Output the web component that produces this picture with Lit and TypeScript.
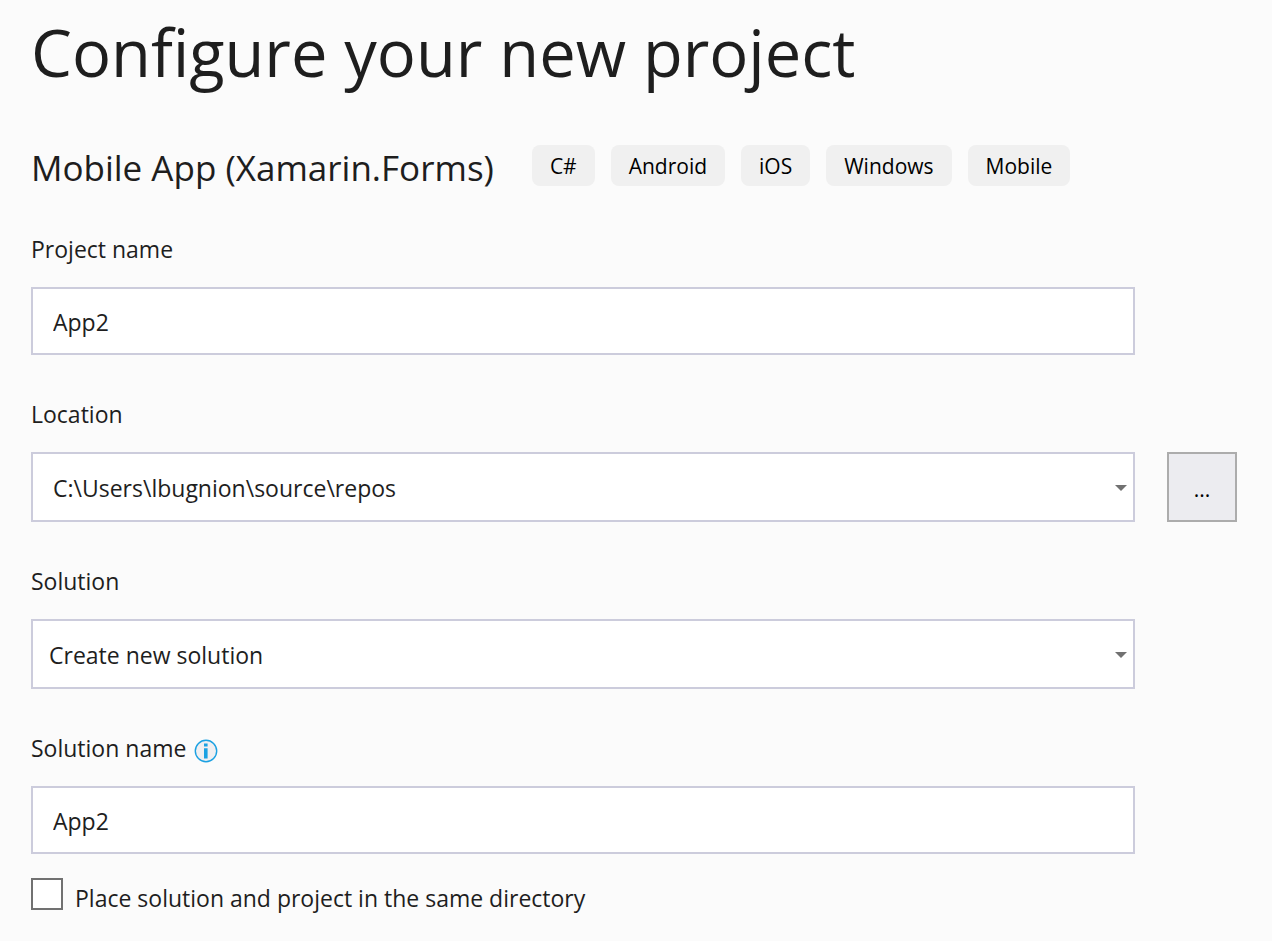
import { LitElement, html, css, svg } from "lit";
import { customElement, property } from "lit/decorators.js";

const chevron = svg`<path d="M0 0H12L6 6Z" fill="#717171" />`;

@customElement("tag-list")
class TagList extends LitElement {
  @property({ attribute: false }) tags: string[] = [];

  static styles = css`
    .tags {
      display: flex;
      flex-wrap: wrap;
      gap: 16px;
      margin: 0;
      padding: 0;
      list-style: none;
    }
    .tag {
      padding: 2px 18px 0;
      border-radius: 8px;
      background: #f0f0f0;
      color: #000;
      font-size: 21px;
      line-height: 39px;
    }
  `;

  render() {
    return html`<ul class="tags">
      ${this.tags.map((t) => html`<li class="tag">${t}</li>`)}
    </ul>`;
  }
}

@customElement("app-root")
class AppRoot extends LitElement {
  static styles = css`
    :host {
      display: block;
      min-height: 100vh;
      box-sizing: border-box;
      background: #fbfbfb;
      color: #1e1e1e;
      font-family: "Segoe UI", "Open Sans", "Noto Sans", sans-serif;
      font-size: 23px;
      line-height: 32px;
    }
    * {
      box-sizing: border-box;
    }
    .page {
      padding: 8px 35px 24px 31px;
    }
    .title {
      margin: 0;
      font-size: 65px;
      line-height: 88px;
      font-weight: 400;
    }
    .template {
      display: flex;
      align-items: center;
      gap: 38px;
      margin-top: 46px;
    }
    .subtitle {
      margin: 0;
      padding-top: 2px;
      font-size: 35px;
      line-height: 48px;
      font-weight: 400;
    }
    .tags {
      margin-bottom: 4px;
    }
    .form {
      display: flex;
      flex-direction: column;
      gap: 43px;
      margin-top: 41px;
    }
    .field {
      display: grid;
      grid-template-columns: 1fr 70px;
      column-gap: 32px;
      row-gap: 22px;
    }
    .caption {
      grid-column: 1 / -1;
      display: flex;
      align-items: center;
      gap: 8px;
    }
    .info {
      display: block;
      margin-top: 6px;
    }
    .box {
      width: 100%;
      height: 68px;
      margin: 0;
      padding: 2px 20px 0;
      border: 2px solid #ccccdc;
      border-radius: 0;
      background: #fff;
      color: inherit;
      font: inherit;
      appearance: none;
    }
    .combo {
      display: grid;
      align-items: center;
    }
    .combo > * {
      grid-area: 1 / 1;
    }
    .combo .box {
      height: 70px;
    }
    .combo .list {
      padding-left: 16px;
    }
    .arrow {
      justify-self: end;
      margin-top: 2px;
      margin-right: 8px;
      pointer-events: none;
    }
    .browse {
      height: 70px;
      padding: 4px 0 0;
      border: 2px solid #acacac;
      background: #ececf0;
      color: #000;
      font: inherit;
      font-size: 21px;
    }
    .check {
      display: flex;
      align-items: center;
      gap: 12px;
      margin-top: 20px;
    }
    .tick {
      appearance: none;
      flex: none;
      width: 32px;
      height: 32px;
      margin: 0;
      border: 2px solid #717171;
      background: #fff;
    }
    .tick:checked {
      background: #717171;
      box-shadow: inset 0 0 0 5px #fff;
    }
    .check-text {
      padding-top: 8px;
    }
  `;

  private arrow() {
    return html`<svg class="arrow" width="12" height="6" viewBox="0 0 12 6" aria-hidden="true">${chevron}</svg>`;
  }

  render() {
    return html`
      <main class="page">
        <h1 class="title">Configure your new project</h1>
        <div class="template">
          <h2 class="subtitle">Mobile App (Xamarin.Forms)</h2>
          <tag-list class="tags" .tags=${["C#", "Android", "iOS", "Windows", "Mobile"]}></tag-list>
        </div>
        <form class="form" @submit=${(e: Event) => e.preventDefault()}>
          <div class="field">
            <label class="caption" for="project">Project name</label>
            <input class="box" id="project" type="text" value="App2" />
          </div>
          <div class="field">
            <label class="caption" for="location">Location</label>
            <div class="combo">
              <select class="box" id="location">
                <option>C:\\Users\\lbugnion\\source\\repos</option>
              </select>
              ${this.arrow()}
            </div>
            <button class="browse" type="button" aria-label="Browse">...</button>
          </div>
          <div class="field">
            <label class="caption" for="solution">Solution</label>
            <div class="combo">
              <select class="box list" id="solution">
                <option>Create new solution</option>
              </select>
              ${this.arrow()}
            </div>
          </div>
          <div class="field">
            <label class="caption" for="solution-name">
              <span>Solution name</span>
              <svg class="info" width="24" height="24" viewBox="0 0 24 24" aria-hidden="true">
                <circle cx="12" cy="12" r="10.7" fill="#f0eff1" stroke="#1ba1e2" stroke-width="1.4" />
                <path d="M10 4.5h3.6v3H10zM10 9.3h3.6v10.2H10z" fill="#1ba1e2" />
              </svg>
            </label>
            <input class="box" id="solution-name" type="text" value="App2" />
          </div>
        </form>
        <div class="check">
          <input class="tick" id="same-dir" type="checkbox" />
          <label class="check-text" for="same-dir">Place solution and project in the same directory</label>
        </div>
      </main>
    `;
  }
}
